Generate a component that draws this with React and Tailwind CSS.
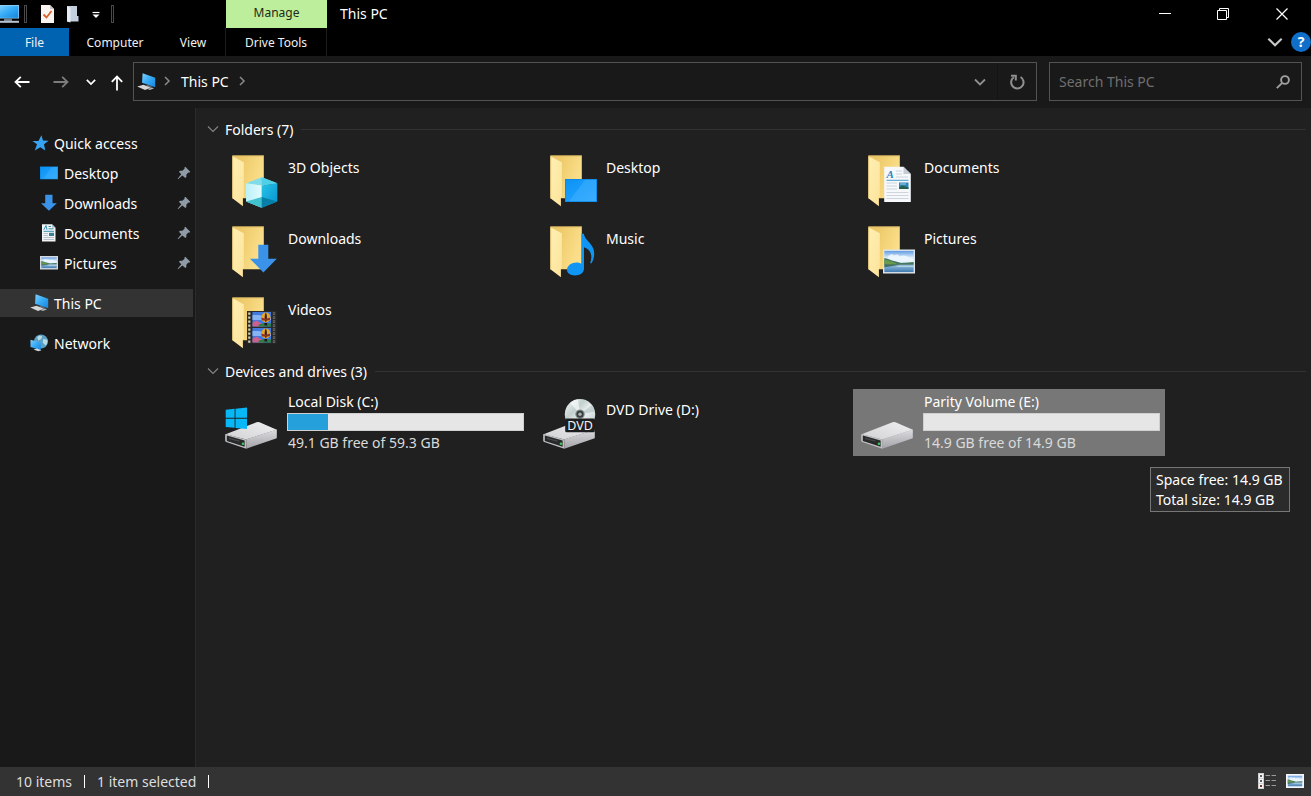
import React from "react";

const Gradients = () => (
  <svg width="0" height="0" className="absolute" aria-hidden="true">
    <defs>
      <linearGradient id="folderBack" x1="0.3" y1="0" x2="1" y2="0.3">
        <stop offset="0" stopColor="#ecc868" />
        <stop offset="0.5" stopColor="#f4d479" />
        <stop offset="1" stopColor="#fade8a" />
      </linearGradient>
      <linearGradient id="folderFront" x1="0" y1="0" x2="1" y2="1">
        <stop offset="0" stopColor="#fff0b4" />
        <stop offset="1" stopColor="#fde39a" />
      </linearGradient>
      <linearGradient id="screen" x1="0" y1="0" x2="1" y2="1">
        <stop offset="0" stopColor="#0a93f5" />
        <stop offset="0.5" stopColor="#1a9dfb" />
        <stop offset="1" stopColor="#2fa8ff" />
      </linearGradient>
      <linearGradient id="monitor" x1="0" y1="0" x2="1" y2="1">
        <stop offset="0" stopColor="#7fd0ff" />
        <stop offset="0.5" stopColor="#35aaf5" />
        <stop offset="1" stopColor="#1486dc" />
      </linearGradient>
      <linearGradient id="sky" x1="0" y1="0" x2="0" y2="1">
        <stop offset="0" stopColor="#5f98e2" />
        <stop offset="0.5" stopColor="#d9ecfb" />
        <stop offset="1" stopColor="#a8cdea" />
      </linearGradient>
      <linearGradient id="lake" x1="0" y1="0" x2="0" y2="1">
        <stop offset="0" stopColor="#9cc4e0" />
        <stop offset="1" stopColor="#3d78b0" />
      </linearGradient>
      <linearGradient id="driveTop" x1="0" y1="1" x2="1" y2="0">
        <stop offset="0" stopColor="#d2d2d5" />
        <stop offset="1" stopColor="#efeff1" />
      </linearGradient>
      <linearGradient id="driveSide" x1="0" y1="0" x2="0" y2="1">
        <stop offset="0" stopColor="#dcdcdf" />
        <stop offset="1" stopColor="#a3a3a8" />
      </linearGradient>
      <linearGradient id="disc" x1="0" y1="0" x2="1" y2="1">
        <stop offset="0" stopColor="#f4f8f7" />
        <stop offset="0.35" stopColor="#c3d0cf" />
        <stop offset="0.55" stopColor="#eef2f1" />
        <stop offset="1" stopColor="#b4c4c6" />
      </linearGradient>
      <linearGradient id="cubeLeft" x1="0" y1="0" x2="1" y2="0">
        <stop offset="0" stopColor="#b9f1f8" />
        <stop offset="1" stopColor="#e3fbfd" />
      </linearGradient>
      <linearGradient id="cubeRight" x1="0" y1="0" x2="1" y2="1">
        <stop offset="0" stopColor="#27c3e6" />
        <stop offset="1" stopColor="#0491cf" />
      </linearGradient>
    </defs>
  </svg>
);

/* ---------- large tile icons (60 x 56) ---------- */

const Folder = ({ children }) => (
  <svg width="60" height="56" viewBox="0 0 60 56" className="shrink-0" aria-hidden="true">
    <path d="M10.400 2.600H41.800V45.300H10.400Z" fill="url(#folderBack)" />
    <path d="M10.400 2.600H41.800V3.400H10.400Z" fill="#dfbb62" />
    <path d="M10.400 3.200L21.800 9.200V44.600H20.900V53.200L10.400 45.200Z" fill="url(#folderFront)" />
    <path d="M10.700 3V45.200" stroke="#e0bd66" strokeWidth="0.600" />
    {children}
  </svg>
);

const Landscape = ({ x, y, w, h }) => (
  <svg x={x} y={y} width={w} height={h} viewBox="0 0 30 22" preserveAspectRatio="none">
    <rect width="30" height="14" fill="url(#sky)" />
    <path d="M4 6c2-3 5-3 6-1 2-2 5-1 6 1 3-2 7-1 9 1l5 1v4H2z" fill="#f3f9fe" opacity="0.800" />
    <rect y="14" width="30" height="8" fill="url(#lake)" />
    <path d="M0 7.500L4 8.500 8 10 12 11 17 12.500 22 12.200 30 11.500V14.200H0Z" fill="#47775f" />
    <path d="M0 9L4 10 9 11.500 14 14H0Z" fill="#6a9a4b" />
    <path d="M0 14H16L9 15.600 0 16.800Z" fill="#2f5b4a" opacity="0.800" />
    <path d="M15 15.500H30V16.700H11Z" fill="#d5e9f4" opacity="0.600" />
  </svg>
);

const Objects3D = () => (
  <Folder>
    <path d="M24 30.300L39.700 24.300 55.300 30.300 39.700 32.600Z" fill="#7fdcea" />
    <path d="M24 30.300L39.700 32.600V54.800L24 48.600Z" fill="url(#cubeLeft)" />
    <path d="M55.300 30.300L39.700 32.600V54.800L55.300 48.600Z" fill="url(#cubeRight)" />
    <path d="M39.700 24.300L55.300 30.300 39.700 32.600Z" fill="#4fd0e6" />
    <path d="M24 48.600L39.700 44V54.800Z" fill="#41c3cf" />
    <path d="M55.300 48.600L39.700 44V54.800Z" fill="#087fa9" />
  </Folder>
);

const DesktopFolder = () => (
  <Folder>
    <rect x="25" y="26" width="32" height="23" fill="#0d86e2" />
    <rect x="25.800" y="26.800" width="30.400" height="21.400" fill="url(#screen)" />
    <path d="M45 26.800L29 48.200H56.200V26.800Z" fill="#4db6ff" opacity="0.400" />
  </Folder>
);

const DocumentsFolder = () => (
  <Folder>
    <path d="M26.200 13.700H45.500L52.800 21V49H26.200Z" fill="#f6f8fb" />
    <path d="M45.500 13.700V21H52.800Z" fill="#c5ccd6" />
    <text x="28.500" y="25" fontFamily="Liberation Serif, serif" fontStyle="italic" fontWeight="bold" fontSize="11" fill="#2f86bf">A</text>
    <path d="M38 18H44M38 21H44M38 24H50M28.500 33H39M28.500 36H39M28.500 39.500H50.500M28.500 42.500H50.500M28.500 45.500H50.500M28.500 30H39" stroke="#c3ccd6" strokeWidth="0.800" />
    <path d="M28.500 27.300H50.500" stroke="#4b9ccb" strokeWidth="1" />
    <rect x="41" y="29.500" width="9.500" height="6.500" fill="#2f86b5" />
    <path d="M41 34.500L44 32.500 50.500 34.500V36H41Z" fill="#25604f" />
    <path d="M42 31H48" stroke="#9fd0ea" strokeWidth="1" />
  </Folder>
);

const DownloadsFolder = () => (
  <Folder>
    <path d="M36.300 20.700H46.300V34.800H54.800L41.400 48.400 28 34.800H36.300Z" fill="#3a93e8" />
  </Folder>
);

const MusicFolder = () => (
  <Folder>
    <path d="M41.300 9.800H43.900C44.600 17 54.200 19.500 54.200 29.500C54.200 33.500 53 37 51.300 39.600L50.200 39C52.600 32 51.500 26 44 23.200V44.500C44 49 39.600 51.400 35.200 51.400C30 51.400 27 48.900 27 45.800C27 41.800 31.600 38.600 36.600 38.600C38.700 38.600 40.400 39.200 41.300 40Z" fill="#0f95f3" />
  </Folder>
);

const PicturesFolder = () => (
  <Folder>
    <rect x="25" y="25.500" width="32" height="24" fill="#dfe5ea" />
    <Landscape x="26.200" y="26.700" w="29.600" h="21.600" />
  </Folder>
);

const Balloon = ({ y }) => (
  <g transform={`translate(0 ${y})`}>
    <rect x="30.500" y="0" width="18.500" height="14.500" fill="#3f7be0" />
    <path d="M30.500 3h7l4 2h7.500v3H30.500z" fill="#86b3f3" />
    <path d="M30.500 10.500l4-2 4 2.500 3 1.500V14.500H30.500z" fill="#c9618c" />
    <path d="M37 12.500l5-1.500 7 .5V14.500H36z" fill="#2f7b4b" />
    <ellipse cx="43.800" cy="5.500" rx="4.600" ry="5" fill="#e9a52b" />
    <path d="M43.800 .5c-1.500 2-1.500 8 0 10c1.500-2 1.500-8 0-10" fill="#30222a" />
    <path d="M39.200 5.500c3 1.500 6.200 1.500 9.200 0l-.6 2.400c-2.700 1-5.300 1-8 0z" fill="#8e3020" />
    <rect x="42.500" y="11" width="2.600" height="2.400" fill="#1c1512" />
  </g>
);

const VideosFolder = () => (
  <Folder>
    <rect x="25" y="16" width="29.500" height="32.500" fill="#2b2b2b" />
    <Balloon y={17} />
    <Balloon y={33} />
    <path d="M27.300 17.500V48" stroke="#d8cfa8" strokeWidth="2.200" strokeDasharray="2.200 1.800" />
    <path d="M52 17.500V48" stroke="#8b8b8b" strokeWidth="2.200" strokeDasharray="2.200 1.800" />
    <path d="M52 17.500V48" stroke="#202020" strokeWidth="1.200" strokeDasharray="1.400 2.600" strokeDashoffset="-0.400" />
  </Folder>
);

const DriveBody = () => (
  <>
    <path d="M3.600 39.200L34.500 27.200Q36 26.600 37.500 27.200L54.800 34.800 24.300 44.500Z" fill="url(#driveTop)" />
    <path d="M24.300 44.200L54.800 34.600V42.400Q54.800 43.200 54 43.500L24.300 53.700Z" fill="url(#driveSide)" />
    <path d="M3.200 39.600Q3.200 38.800 4.200 39L24.300 44.400V53.800L4.200 47Q3.200 46.600 3.200 45.800Z" fill="#c0c0c4" />
    <path d="M4.800 40.600L22.600 45.400V51.800L4.800 46Z" fill="#272a29" />
    <path d="M7 42.800L17.500 45.600V46.800L7 44Z" fill="#454a48" />
    <circle cx="21" cy="48.800" r="1.300" fill="#3fc85c" />
  </>
);

const DriveSvg = ({ children }) => (
  <svg width="60" height="56" viewBox="0 0 60 56" className="shrink-0" aria-hidden="true">
    <DriveBody />
    {children}
  </svg>
);

const WindowsDrive = () => (
  <DriveSvg>
    <path d="M3.700 14.800L12.600 13.800V22.800H3.700ZM13.500 13.700L25 12.500V22.800H13.500ZM3.700 23.700H12.600V32.800L3.700 31.900ZM13.500 23.700H25V34L13.500 32.900Z" fill="#08b7f5" />
  </DriveSvg>
);

const DvdDrive = () => (
  <DriveSvg>
    <circle cx="40" cy="19.200" r="15.200" fill="url(#disc)" />
    <path d="M40 19.200L30 7.700a15.200 15.200 0 0 1 8-3.500z" fill="#fff" opacity="0.600" />
    <path d="M40 19.200L52 9.900a15.200 15.200 0 0 1 3 6.500z" fill="#9fb5b8" opacity="0.500" />
    <circle cx="40" cy="19.200" r="4.800" fill="#8e9796" />
    <circle cx="40" cy="19.200" r="3.600" fill="#3a3f3f" />
    <circle cx="40" cy="19.200" r="1.700" fill="#aab0b0" />
    <rect x="25.200" y="23.600" width="29.600" height="13.600" rx="1.500" fill="#1d1d1f" />
    <text x="40" y="34.800" textAnchor="middle" fontFamily="Noto Sans, sans-serif" fontSize="12.500" fill="#f2f2f2">DVD</text>
  </DriveSvg>
);

const PlainDrive = () => <DriveSvg />;

/* ---------- small icons (20 x 20) ---------- */

const Small = ({ children, className = "shrink-0" }) => (
  <svg width="20" height="20" viewBox="0 0 20 20" className={className} aria-hidden="true">
    {children}
  </svg>
);

const StarIcon = () => (
  <Small>
    <path d="M11.400 2.300L13 7.500 18.600 7.800 14 11.200 15.300 17.400 10.300 14.200 4.800 17.600 7 11.300 2.400 8.100 8.500 7.900Z" fill="#36a4f2" />
  </Small>
);
const DesktopIcon = () => (
  <Small>
    <rect x="0" y="3.500" width="18" height="12.800" fill="#0d86e2" />
    <rect x="0.600" y="4" width="16.800" height="11.800" fill="url(#screen)" />
    <path d="M12 4L3 15.800H17.400V4Z" fill="#4db6ff" opacity="0.350" />
  </Small>
);
const DownloadIcon = () => (
  <Small>
    <path d="M5.200 1.800H12.500V10.200H16.800L8.900 17.800 1 10.200H5.200Z" fill="#3a93e8" />
  </Small>
);
const DocumentIcon = () => (
  <Small>
    <path d="M2 1.200H12L15.500 4.700V18.500H2Z" fill="#f1f4f7" />
    <path d="M12 1.200V4.700H15.500Z" fill="#b7c0ca" />
    <path d="M3.800 6.800L6 2.500 7 6.800M8.500 3.500H11M8.500 5.800H13.500M3.500 8.300H14" stroke="#3a93b0" strokeWidth="1" fill="none" />
    <path d="M3.500 10.500H8M3.500 12.500H8M3.500 14.500H14M3.500 16.500H14" stroke="#a9b4bf" strokeWidth="0.800" />
    <rect x="9" y="9.800" width="5" height="3.200" fill="#3b7f93" />
  </Small>
);
const PictureIcon = () => (
  <Small>
    <rect x="0" y="3" width="18" height="13.500" fill="#d3d9df" />
    <Landscape x="1.200" y="4.200" w="15.600" h="11.100" />
  </Small>
);
const ComputerIcon = () => (
  <Small>
    <path d="M5.600 1.300L18.200 5.800V15.200L5 10.800Z" fill="url(#monitor)" />
    <path d="M9.500 12.400L14.500 14V16L9.500 14.500Z" fill="#5b6b78" />
    <path d="M0.200 14.600L6.500 12.800 13.800 15.800 8 18Z" fill="#d5d6d8" />
    <path d="M10.500 17L15 15.500 17 16.500 12.700 18Z" fill="#aeb2b6" />
  </Small>
);
const NetworkIcon = () => (
  <Small>
    <circle cx="11" cy="8.500" r="7" fill="#5e9fc2" />
    <path d="M7.200 4c2-1.800 4-1.500 5-.5l-1 2.500-3 1.500zM13.200 6l4 .8c.7 2-.2 4.500-1.500 5.800l-3-3z" fill="#b5dbe8" />
    <path d="M0.500 6.800L10.800 9.500V17.300L0.500 13.900Z" fill="url(#monitor)" />
    <path d="M3.500 16.500L7 15.500 11.500 17.200 8.300 18.300Z" fill="#d5d6d8" />
  </Small>
);
const PinIcon = () => (
  <svg width="14" height="14" viewBox="0 0 14 14" className="ml-auto shrink-0" aria-label="Pinned">
    <path d="M8.300 .8L13.200 5.700 12.300 6.700 11.300 6.500 9.300 8.700 9.400 11 8.300 12 5.400 9.400 1.300 13.100 .6 12.700 4.300 8.200 1.900 5.700 3 4.700 5.300 4.800 7.600 2.800 7.300 1.800Z" fill="#8f9ba6" />
  </svg>
);

const Chevron = ({ size = 12, width = 1.5, className = "" }) => (
  <svg width={size} height={size} viewBox="0 0 12 12" className={className} aria-hidden="true">
    <path d="M1 3.500L6 8.500 11 3.500" fill="none" stroke="currentColor" strokeWidth={width} />
  </svg>
);
const ChevronRight = () => (
  <svg width="8" height="12" viewBox="0 0 8 12" className="text-[#8a8a8a]" aria-hidden="true">
    <path d="M2 1L6 5 2 9" fill="none" stroke="currentColor" strokeWidth="1.500" />
  </svg>
);
const Arrow = ({ className }) => (
  <svg width="16" height="16" viewBox="0 0 16 16" className={className} aria-hidden="true">
    <path d="M15.500 8H1.500M6.800 2.800L1.500 8 6.800 13.200" fill="none" stroke="currentColor" strokeWidth="1.800" />
  </svg>
);

/* ---------- sections ---------- */

const Separator = () => <span className="h-[18px] w-[3px] border border-[#4a4a4a]" />;

const TitleBar = () => (
  <div className="flex h-7 bg-black">
    <div className="flex w-[226px] items-center">
      <svg width="20" height="20" viewBox="0 0 20 20" aria-hidden="true">
        <rect x="-3" y="1" width="22" height="13.500" fill="#8fd0f7" />
        <rect x="-2" y="1.800" width="20.300" height="12" fill="url(#monitor)" />
        <rect x="4" y="14.500" width="8" height="2.500" fill="#6f7c8a" />
        <rect x="-1" y="16.800" width="20" height="2" fill="#b9c4d2" />
      </svg>
      <span className="ml-1 flex"><Separator /></span>
      <button type="button" aria-label="Properties" className="ml-3">
        <svg width="16" height="20" viewBox="0 0 16 20" aria-hidden="true">
          <path d="M2 1H11L15 5V19H2Z" fill="#f7f4f2" />
          <path d="M11 1V5H15Z" fill="#c9c4c0" />
          <path d="M4.500 10.500L7.500 13.500 12.500 7" fill="none" stroke="#d9622b" strokeWidth="1.800" />
        </svg>
      </button>
      <button type="button" aria-label="New folder" className="ml-2">
        <svg width="18" height="20" viewBox="0 0 18 20" aria-hidden="true">
          <path d="M4 2H14V12H15.500V17.500H4Z" fill="#c3cede" />
          <path d="M4 2L7.500 4V18.500L4 17.500Z" fill="#e6ecf5" />
        </svg>
      </button>
      <button type="button" aria-label="Customize toolbar" className="ml-2 text-white">
        <svg width="14" height="14" viewBox="0 0 14 14" aria-hidden="true">
          <path d="M3.500 5.500H10.500" stroke="currentColor" strokeWidth="1.200" />
          <path d="M3.500 7.500H10.500L7 11Z" fill="currentColor" />
        </svg>
      </button>
      <span className="ml-2 flex"><Separator /></span>
    </div>
    <div className="flex w-[101px] items-center justify-center bg-[#bdee9b] pb-[2px] text-[12px] text-[#1f2a17]">Manage</div>
    <h1 className="flex items-center pb-[2px] pl-[13px] text-[14px]">This PC</h1>
    <div className="ml-auto flex pb-px">
      <button type="button" aria-label="Minimize" className="flex w-[58px] items-center justify-center">
        <svg width="12" height="12" viewBox="0 0 12 12" aria-hidden="true"><path d="M0 5.500H12" stroke="#fff" /></svg>
      </button>
      <button type="button" aria-label="Restore" className="flex w-[58px] items-center justify-center">
        <svg width="12" height="12" viewBox="0 0 12 12" aria-hidden="true"><path d="M.5 2.500H9.500V11.500H.5ZM2.500 2.500V.5H11.500V9.500H9.500" fill="none" stroke="#fff" /></svg>
      </button>
      <button type="button" aria-label="Close" className="flex w-[59px] items-center justify-center">
        <svg width="12" height="12" viewBox="0 0 12 12" aria-hidden="true"><path d="M.5 .5L11.500 11.500M11.500 .5L.5 11.500" stroke="#fff" strokeWidth="1.200" /></svg>
      </button>
    </div>
  </div>
);

const Ribbon = () => (
  <div className="flex h-7 bg-black text-[12px] text-[#f0f0f0]">
    <button type="button" className="w-[69px] bg-[#0063b1] pt-[2px]">File</button>
    <button type="button" className="w-[92px] pt-[2px]">Computer</button>
    <button type="button" className="w-[64px] pt-[2px]">View</button>
    <button type="button" className="w-[102px] border-x border-[#1c1c1c] pt-[2px]">Drive Tools</button>
    <div className="ml-auto flex items-center">
      <button type="button" aria-label="Expand ribbon" className="mr-2 text-[#c8c8c8]">
        <Chevron size={16} width={1.6} />
      </button>
      <button type="button" aria-label="Help" className="flex h-5 w-5 items-center justify-center rounded-full bg-[#0f6fc9] text-[14px] font-bold leading-none text-white">?</button>
    </div>
  </div>
);

const NavBar = () => (
  <div className="flex h-[52px] items-start bg-[#191919] pt-[6px] pr-[9px]">
    <div className="flex h-[39px] w-[133px] shrink-0 items-center">
      <button type="button" aria-label="Back" className="ml-[14px]"><Arrow className="text-white" /></button>
      <button type="button" aria-label="Forward" className="ml-[23px]"><Arrow className="rotate-180 text-[#7d7d7d]" /></button>
      <button type="button" aria-label="Recent locations" className="ml-[17px]"><Chevron size={10} width={2} className="text-white" /></button>
      <button type="button" aria-label="Up" className="ml-[13px] pt-[2px]"><Arrow className="rotate-90 text-white" /></button>
    </div>
    <div className="flex h-[39px] flex-1 items-center border border-[#535353] pl-[3px]">
      <ComputerIcon />
      <span className="ml-[6px]"><ChevronRight /></span>
      <a href="#this-pc" className="ml-[10px] text-[14px]">This PC</a>
      <span className="ml-[9px]"><ChevronRight /></span>
      <button type="button" aria-label="Previous locations" className="ml-auto flex h-full w-9 items-center justify-center border-r border-[#141414] text-[#8f8f8f]">
        <Chevron width={1.8} />
      </button>
      <button type="button" aria-label="Refresh" className="flex h-full w-[38px] items-center justify-center text-[#8f8f8f]">
        <svg width="16" height="16" viewBox="0 0 16 16" aria-hidden="true">
          <path d="M11.600 3A6.200 6.200 0 1 1 4.800 3.200" fill="none" stroke="currentColor" strokeWidth="2" />
          <path d="M2 1.800H6.800V6.600" fill="none" stroke="currentColor" strokeWidth="2" />
        </svg>
      </button>
    </div>
    <form className="ml-3 flex h-[39px] w-[253px] items-center border border-[#535353]" onSubmit={(e) => e.preventDefault()}>
      <input type="search" aria-label="Search This PC" placeholder="Search This PC" className="h-full min-w-0 flex-1 bg-transparent pl-[9px] text-[14px] text-white outline-none placeholder:text-[#6f6f6f]" />
      <button type="submit" aria-label="Search" className="mr-[11px] text-[#a0a0a0]">
        <svg width="14" height="14" viewBox="0 0 14 14" aria-hidden="true">
          <circle cx="9" cy="5" r="3.900" fill="none" stroke="currentColor" strokeWidth="1.900" />
          <path d="M6.200 7.800L.8 13.200" stroke="currentColor" strokeWidth="1.900" />
        </svg>
      </button>
    </form>
  </div>
);

const quickItems = [
  { label: "Desktop", Icon: DesktopIcon },
  { label: "Downloads", Icon: DownloadIcon },
  { label: "Documents", Icon: DocumentIcon },
  { label: "Pictures", Icon: PictureIcon },
];

const Sidebar = () => (
  <nav aria-label="Locations" className="flex w-[196px] shrink-0 flex-col gap-3 border-r border-[#2b2b2b] bg-[#191919] pt-[21px] text-[14px]">
    <div className="flex flex-col gap-[2px]">
      <a href="#quick-access" className="flex h-7 items-center gap-1 pl-[30px]"><StarIcon />Quick access</a>
      {quickItems.map(({ label, Icon }) => (
        <a key={label} href={`#${label}`} className="flex h-7 items-center gap-1 pl-10 pr-1">
          <Icon />{label}<PinIcon />
        </a>
      ))}
    </div>
    <a href="#this-pc" aria-current="page" className="mr-[2px] flex h-7 items-center gap-1 bg-[#333333] pl-[30px]"><ComputerIcon />This PC</a>
    <a href="#network" className="flex h-7 items-center gap-1 pl-[30px]"><NetworkIcon />Network</a>
  </nav>
);

const SectionHeader = ({ children }) => (
  <h2 className="mb-[3px] flex h-[30px] items-center gap-2 pr-[5px] text-[14px]">
    <button type="button" aria-expanded="true" className="flex items-center gap-[6px]">
      <Chevron width={1.1} className="text-[#858585]" />
      {children}
    </button>
    <span className="h-px flex-1 bg-[#333333]" />
  </h2>
);

const folders = [
  { label: "3D Objects", Icon: Objects3D },
  { label: "Desktop", Icon: DesktopFolder },
  { label: "Documents", Icon: DocumentsFolder },
  { label: "Downloads", Icon: DownloadsFolder },
  { label: "Music", Icon: MusicFolder },
  { label: "Pictures", Icon: PicturesFolder },
  { label: "Videos", Icon: VideosFolder },
];

const drives = [
  { label: "Local Disk (C:)", Icon: WindowsDrive, free: 49.1, total: 59.3 },
  { label: "DVD Drive (D:)", Icon: DvdDrive },
  { label: "Parity Volume (E:)", Icon: PlainDrive, free: 14.9, total: 14.9, selected: true },
];

const SimpleTile = ({ label, Icon }) => (
  <a href={`#${label}`} className="flex h-[67px] gap-[5px] pl-[5px] pt-[6px] text-[14px] leading-[22px]">
    <Icon />
    <span className="pl-px pt-1">{label}</span>
  </a>
);

const DriveTile = ({ label, Icon, free, total, selected }) => (
  <div className="relative">
    <a
      href={`#${label}`}
      className={
        selected
          ? "flex h-[67px] gap-[5px] bg-[#777777] px-[5px] text-[14px] leading-[22px]"
          : "flex h-[67px] gap-[5px] px-[5px] text-[14px] leading-[22px]"
      }
    >
      <span className="pt-[6px]"><Icon /></span>
      <span className="flex flex-1 flex-col pt-[2px]">
        <span className="pl-px">{label}</span>
        <span role="meter" aria-label={`${label} used space`} aria-valuemin={0} aria-valuemax={total} aria-valuenow={total - free} className="mb-px block h-[18px] border border-[#cfcfcf] bg-[#e6e6e6]">
          <span className="block h-full bg-[#26a0da]" style={{ width: `${((total - free) / total) * 100}%` }} />
        </span>
        <span className="pl-px text-[#dadada]">{free} GB free of {total} GB</span>
      </span>
    </a>
    {selected && (
      <div role="tooltip" className="absolute left-[297px] top-[78px] whitespace-nowrap border border-[#767676] bg-[#2b2b2b] pb-px pl-[5px] pr-[6px] pt-[2px] text-[14px] leading-5">
        <p>Space free: {free} GB</p>
        <p>Total size: {total} GB</p>
      </div>
    )}
  </div>
);

const grid = "grid grid-cols-[repeat(auto-fill,312px)] gap-x-[6px] gap-y-1 pl-[10px]";

const Content = () => (
  <main className="min-w-0 flex-1 bg-[#202020] pl-[11px] pt-[6px]">
    <section>
      <SectionHeader>Folders (7)</SectionHeader>
      <div className={grid}>
        {folders.map((f) => <SimpleTile key={f.label} {...f} />)}
      </div>
    </section>
    <section>
      <SectionHeader>Devices and drives (3)</SectionHeader>
      <div className={grid}>
        {drives.map((d) => (d.total ? <DriveTile key={d.label} {...d} /> : <SimpleTile key={d.label} {...d} />))}
      </div>
    </section>
  </main>
);

const StatusBar = () => (
  <footer className="flex h-[29px] items-center bg-[#333333] pl-4 pr-[7px] text-[14px] text-[#dedede]">
    <span>10 items</span>
    <span className="mx-3 h-[13px] w-px bg-white" />
    <span>1 item selected</span>
    <span className="mx-3 h-[13px] w-px bg-white" />
    <div className="ml-auto flex items-center gap-[10px] pb-px">
      <button type="button" aria-label="Details view">
        <svg width="18" height="16" viewBox="0 0 18 16" aria-hidden="true">
          <path d="M0 0H6V16H0Z" fill="#cfcfcf" />
          <path d="M1 1H5V5H1ZM1 6H5V10H1ZM1 11H5V15H1Z" fill="#f5f5f5" />
          <path d="M2 2H4V4H2ZM2 7H4V9H2Z" fill="#55606b" />
          <path d="M2 12H4V14H2Z" fill="#7a2f2f" />
          <path d="M7.500 2.500H12M13.500 2.500H18M7.500 7.500H12M13.500 7.500H18M7.500 12.500H12M13.500 12.500H18" stroke="#9a9a9a" />
        </svg>
      </button>
      <button type="button" aria-label="Large icons view">
        <svg width="18" height="14" viewBox="0 0 18 14" aria-hidden="true">
          <rect width="18" height="14" fill="#f4f6f8" />
          <Landscape x="1.500" y="1.500" w="15" h="11" />
        </svg>
      </button>
    </div>
  </footer>
);

export default function App() {
  return (
    <div className="flex min-h-screen flex-col bg-[#202020] font-['Noto_Sans','Open_Sans',sans-serif] text-white">
      <Gradients />
      <header>
        <TitleBar />
        <Ribbon />
        <NavBar />
      </header>
      <div className="flex flex-1">
        <Sidebar />
        <Content />
      </div>
      <StatusBar />
    </div>
  );
}
